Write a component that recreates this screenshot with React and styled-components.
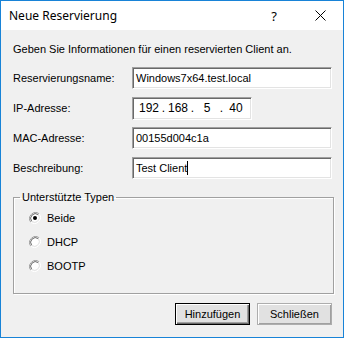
import React from "react";
import styled, { createGlobalStyle } from "styled-components";

const GlobalStyle = createGlobalStyle`
  html, body {
    margin: 0;
    padding: 0;
    background: #ffffff;
  }
  * {
    box-sizing: border-box;
  }
`;

const Window = styled.div`
  width: 344px;
  height: 338px;
  border: 1px solid #1883d7;
  background: #f0f0f0;
  display: flex;
  flex-direction: column;
  font-family: "Liberation Sans", Arial, sans-serif;
  font-size: 11px;
  color: #000;
`;

const TitleBar = styled.div`
  height: 29px;
  background: #ffffff;
  display: flex;
  align-items: center;
  padding-left: 8px;
  font-family: "Noto Sans", "Open Sans", sans-serif;
  font-size: 12px;
`;

const Title = styled.div`
  flex: 1;
`;

const TitleButton = styled.div`
  width: ${(p) => p.w}px;
  height: 29px;
  display: flex;
  align-items: center;
  justify-content: center;
  font-size: 13px;
`;

const Body = styled.div`
  flex: 1;
  display: flex;
  flex-direction: column;
  padding: 13px 11px 0 12px;
`;

const Intro = styled.div`
  line-height: 13px;
  height: 13px;
`;

const Form = styled.div`
  display: grid;
  grid-template-columns: 119px 200px;
  grid-auto-rows: 22px;
  row-gap: 8px;
  margin-top: 11px;
  align-items: center;
`;

const Label = styled.div`
  line-height: 13px;
`;

const TextBox = styled.div`
  height: ${(p) => p.h || 22}px;
  width: ${(p) => p.w || 200}px;
  background: #ffffff;
  border: 1px solid;
  border-color: #a0a0a0 #ffffff #ffffff #a0a0a0;
  box-shadow: inset 1px 1px 0 #696969, inset -1px -1px 0 #e3e3e3;
  display: flex;
  align-items: center;
  padding-left: 3px;
  font-size: 11px;
  white-space: nowrap;
`;

const Caret = styled.span`
  display: inline-block;
  width: 1px;
  height: 14px;
  background: #000;
  vertical-align: middle;
`;

const IpGrid = styled.div`
  display: grid;
  grid-template-columns: 22px 7px 22px 7px 22px 7px 22px;
  align-items: center;
  font-size: 12px;
  padding-left: 2px;
`;

const IpPart = styled.span`
  text-align: center;
`;

const GroupBox = styled.fieldset`
  margin: 12px 0 0 0;
  padding: 2px 0 15px 6px;
  border: 1px solid #a0a0a0;
  box-shadow: inset 1px 1px 0 #ffffff, 1px 1px 0 #ffffff;
  border-radius: 0;
  width: 321px;
`;

const Legend = styled.legend`
  padding: 0 2px;
  line-height: 13px;
`;

const RadioRow = styled.div`
  height: 24px;
  display: flex;
  align-items: center;
  gap: 6px;
  padding-left: 9px;
`;

const Buttons = styled.div`
  display: flex;
  justify-content: flex-end;
  gap: 7px;
  margin-top: 9px;
`;

const Button = styled.div`
  width: 75px;
  height: 22px;
  display: flex;
  align-items: center;
  justify-content: center;
  background: #e1e1e1;
  border: 1px solid ${(p) => (p.primary ? "#000000" : "#adadad")};
  box-shadow: ${(p) =>
    p.primary
      ? "inset 1px 1px 0 #ffffff, inset -1px -1px 0 #696969, inset -2px -2px 0 #a0a0a0"
      : "inset 1px 1px 0 #ffffff, inset -1px -1px 0 #a0a0a0"};
`;

const Radio = ({ checked }) => (
  <svg width="12" height="12" viewBox="0 0 12 12">
    <path d="M10.2 1.8 A6 6 0 0 0 1.8 10.2" fill="none" stroke="#a0a0a0" strokeWidth="1" />
    <path d="M1.8 10.2 A6 6 0 0 0 10.2 1.8" fill="none" stroke="#ffffff" strokeWidth="1" />
    <circle cx="6" cy="6" r="4.6" fill="#ffffff" />
    <path d="M9.3 2.7 A4.7 4.7 0 0 0 2.7 9.3" fill="none" stroke="#696969" strokeWidth="1" />
    <path d="M2.7 9.3 A4.7 4.7 0 0 0 9.3 2.7" fill="none" stroke="#e3e3e3" strokeWidth="1" />
    {checked && <circle cx="6" cy="6" r="2" fill="#000" />}
  </svg>
);

const types = [
  { label: "Beide", checked: true },
  { label: "DHCP", checked: false },
  { label: "BOOTP", checked: false },
];

const App = () => {
  return (
    <>
      <GlobalStyle />
      <Window>
        <TitleBar>
          <Title>Neue Reservierung</Title>
          <TitleButton w={46}>?</TitleButton>
          <TitleButton w={46}>
            <svg width="11" height="11" viewBox="0 0 11 11">
              <path d="M0.5 0.5 L10.5 10.5 M10.5 0.5 L0.5 10.5" stroke="#000" strokeWidth="1" />
            </svg>
          </TitleButton>
        </TitleBar>
        <Body>
          <Intro>Geben Sie Informationen für einen reservierten Client an.</Intro>
          <Form>
            <Label>Reservierungsname:</Label>
            <TextBox>Windows7x64.test.local</TextBox>
            <Label>IP-Adresse:</Label>
            <TextBox w={120} h={23}>
              <IpGrid>
                <IpPart>192</IpPart>
                <IpPart>.</IpPart>
                <IpPart>168</IpPart>
                <IpPart>.</IpPart>
                <IpPart>5</IpPart>
                <IpPart>.</IpPart>
                <IpPart>40</IpPart>
              </IpGrid>
            </TextBox>
            <Label>MAC-Adresse:</Label>
            <TextBox>00155d004c1a</TextBox>
            <Label>Beschreibung:</Label>
            <TextBox>
              Test Client
              <Caret />
            </TextBox>
          </Form>
          <GroupBox>
            <Legend>Unterstützte Typen</Legend>
            {types.map((t) => (
              <RadioRow key={t.label}>
                <Radio checked={t.checked} />
                {t.label}
              </RadioRow>
            ))}
          </GroupBox>
          <Buttons>
            <Button primary>Hinzufügen</Button>
            <Button>Schließen</Button>
          </Buttons>
        </Body>
      </Window>
    </>
  );
};

export default App;
